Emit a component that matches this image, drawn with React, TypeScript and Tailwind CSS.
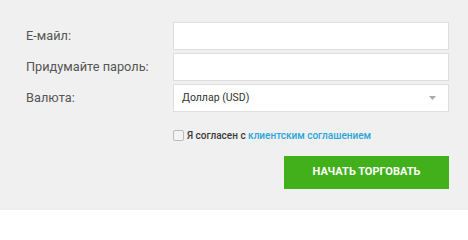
export default function App() {
  const rows = [
    { label: "E-майл:", type: "text" },
    { label: "Придумайте пароль:", type: "password" },
  ];
  return (
    <div className="w-[468px] h-[210px] bg-[#f0f0f0] pl-[26px] pt-[22px] font-['Roboto','Liberation_Sans',sans-serif]">
      <div className="grid grid-cols-[147px_276px] gap-y-[3px]">
        {rows.map((r) => (
          <div key={r.label} className="contents">
            <div className="flex items-center text-[12.75px] text-[#555]">{r.label}</div>
            <input
              type={r.type}
              className="h-[28px] bg-white border border-[#dedede] outline-none"
            />
          </div>
        ))}
        <div className="flex items-center text-[12.75px] text-[#555]">Валюта:</div>
        <div className="h-[28px] bg-white border border-[#dedede] flex items-center justify-between pl-[8px] pr-[12px]">
          <span className="text-[10.5px] text-[#333]">Доллар (USD)</span>
          <svg width="7" height="4" viewBox="0 0 7 4">
            <path d="M0 0h7L3.5 4z" fill="#aaa" />
          </svg>
        </div>
      </div>
      <div className="ml-[147px] mt-[16px] flex items-center gap-[3px] text-[10px] font-medium">
        <span className="w-[11px] h-[11px] rounded-[2px] border border-[#bbb] bg-[#f3f3f3]" />
        <span className="text-[#3a3a3a]">
          Я согласен с <span className="text-[#2aa6da]">клиентским соглашением</span>
        </span>
      </div>
      <div className="mt-[13px] pr-[19px] flex justify-end">
        <button className="w-[165px] h-[33px] bg-[#42b01b] text-white text-[11px] font-bold">
          НАЧАТЬ ТОРГОВАТЬ
        </button>
      </div>
    </div>
  );
}
